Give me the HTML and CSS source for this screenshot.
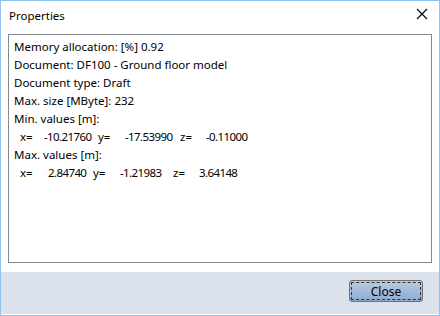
FILE: index.html
```html
<!DOCTYPE html>
<html>
<head>
<meta charset="utf-8">
<link rel="stylesheet" href="styles.css">
</head>
<body>
<div class="window">
  <div class="titlebar">
    <span class="title">Properties</span>
    <svg class="close-x" width="12" height="12" viewBox="0 0 12 12"><path d="M1 1 L11 11 M11 1 L1 11" stroke="#000" stroke-width="1.1" fill="none"/></svg>
  </div>
  <div class="main">
    <div class="box">
      <div class="line">Memory allocation: [%] 0.92</div>
      <div class="line">Document: DF100 - Ground floor model</div>
      <div class="line">Document type: Draft</div>
      <div class="line">Max. size [MByte]: 232</div>
      <div class="line">Min. values [m]:</div>
      <div class="line coords"><span class="a1">x=</span><span class="num a2">-10.21760</span><span class="a3">y=</span><span class="num a4">-17.53990</span><span class="a5">z=</span><span class="num">-0.11000</span></div>
      <div class="line">Max. values [m]:</div>
      <div class="line coords"><span class="b1">x=</span><span class="num b2">2.84740</span><span class="b3">y=</span><span class="num b4">-1.21983</span><span class="b5">z=</span><span class="num">3.64148</span></div>
    </div>
  </div>
  <div class="footer">
    <button class="btn"><span class="focus">Close</span></button>
  </div>
</div>
</body>
</html>
```
FILE: styles.css
```css
html, body { margin: 0; padding: 0; }
body { width: 440px; height: 316px; overflow: hidden; font-family: "Noto Sans", "DejaVu Sans", sans-serif; font-size: 11.5px; color: #000; }
.window { box-sizing: border-box; width: 440px; height: 316px; border: 1px solid #8ec4f2; background: #fff; display: flex; flex-direction: column; }
.titlebar { height: 30px; display: flex; align-items: center; justify-content: space-between; padding: 0 11px 0 8px; }
.title { font-size: 11.5px; margin-top: 2px; }
.close-x { display: block; }
.main { padding: 7px 7px 9px 7px; }
.box { box-sizing: border-box; height: 229px; border: 1px solid #828790; padding: 3px 5px 0 5px; }
.line { height: 18px; line-height: 18px; white-space: pre; }
.coords { padding-left: 6px; display: flex; }
.coords span { flex: none; }
.num { letter-spacing: -0.6px; }
.a1 { width: 24px; }
.a2 { width: 54px; }
.a3 { width: 27px; }
.a4 { width: 55px; }
.a5 { width: 26px; }
.b1 { width: 28px; }
.b2 { width: 45px; }
.b3 { width: 27px; }
.b4 { width: 53px; }
.b5 { width: 26px; }
.footer { height: 38px; background: #dbe2ec; border-bottom: 1px solid #fff; display: flex; justify-content: flex-end; align-items: flex-start; padding: 8px 16px 0 0; box-sizing: content-box; }
.btn { box-sizing: border-box; width: 74px; height: 22px; border: 1px solid #707070; border-radius: 3px; background: linear-gradient(#b9cce3, #8eabd0); padding: 1px; margin: 0; font-family: inherit; font-size: 12px; color: #000; }
.focus { display: flex; align-items: center; justify-content: center; height: 100%; box-sizing: border-box; border: 1px dashed #333; border-radius: 1px; }
```
